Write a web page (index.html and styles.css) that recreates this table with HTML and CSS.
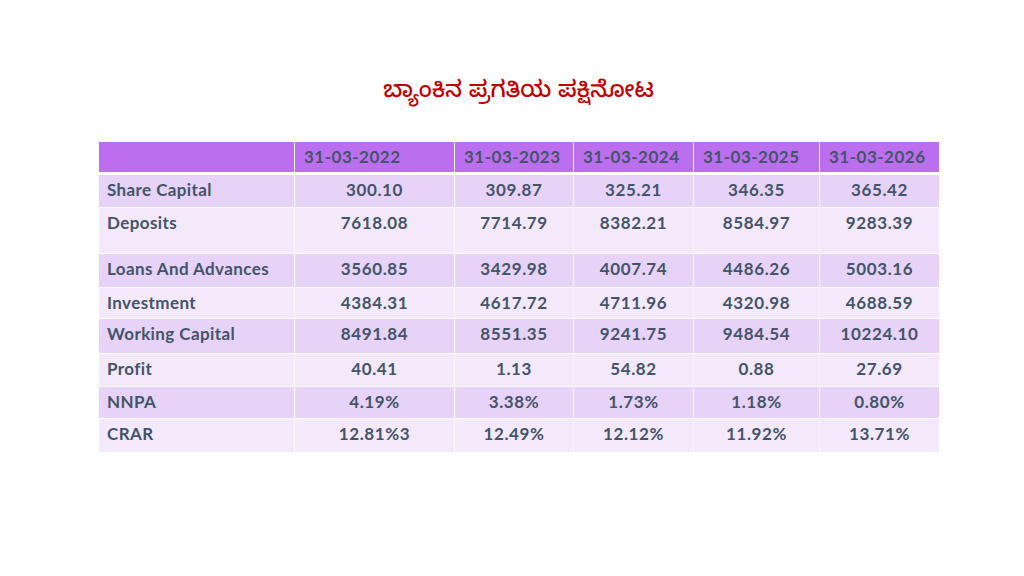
FILE: index.html
```html
<!DOCTYPE html>
<html lang="kn">
<head>
<meta charset="utf-8">
<title>ಬ್ಯಾಂಕಿನ ಪ್ರಗತಿಯ ಪಕ್ಷಿನೋಟ</title>
<link rel="stylesheet" href="styles.css">
</head>
<body>
<main class="slide">
  <h1 class="title">ಬ್ಯಾಂಕಿನ ಪ್ರಗತಿಯ ಪಕ್ಷಿನೋಟ</h1>
  <table class="grid">
    <colgroup>
      <col class="c1"><col class="c2"><col class="c3"><col class="c4"><col class="c5"><col class="c6">
    </colgroup>
    <thead>
      <tr class="h"><th></th><th>31-03-2022</th><th>31-03-2023</th><th>31-03-2024</th><th>31-03-2025</th><th>31-03-2026</th></tr>
    </thead>
    <tbody>
      <tr class="odd r1"><td>Share Capital</td><td>300.10</td><td>309.87</td><td>325.21</td><td>346.35</td><td>365.42</td></tr>
      <tr class="even r2"><td>Deposits</td><td>7618.08</td><td>7714.79</td><td>8382.21</td><td>8584.97</td><td>9283.39</td></tr>
      <tr class="odd r3"><td>Loans And Advances</td><td>3560.85</td><td>3429.98</td><td>4007.74</td><td>4486.26</td><td>5003.16</td></tr>
      <tr class="even r4"><td>Investment</td><td>4384.31</td><td>4617.72</td><td>4711.96</td><td>4320.98</td><td>4688.59</td></tr>
      <tr class="odd r5"><td>Working Capital</td><td>8491.84</td><td>8551.35</td><td>9241.75</td><td>9484.54</td><td>10224.10</td></tr>
      <tr class="even r6"><td>Profit</td><td>40.41</td><td>1.13</td><td>54.82</td><td>0.88</td><td>27.69</td></tr>
      <tr class="odd r7"><td>NNPA</td><td>4.19%</td><td>3.38%</td><td>1.73%</td><td>1.18%</td><td>0.80%</td></tr>
      <tr class="even r8"><td>CRAR</td><td>12.81%3</td><td>12.49%</td><td>12.12%</td><td>11.92%</td><td>13.71%</td></tr>
    </tbody>
  </table>
</main>
</body>
</html>
```
FILE: styles.css
```css
html, body {
  margin: 0;
  padding: 0;
  background: #ffffff;
}
.slide {
  width: 1024px;
  height: 576px;
  display: flex;
  flex-direction: column;
  align-items: flex-start;
  padding: 78px 0 0 98px;
  box-sizing: border-box;
  font-family: "Lato", "Open Sans", sans-serif;
}
.title {
  width: 841px;
  margin: 0 0 32px 0;
  text-align: center;
  color: #c00000;
  font-size: 23px;
  font-weight: 500;
  line-height: 32px;
  font-family: "Noto Sans Kannada", "Noto Sans", "DejaVu Sans", sans-serif;
}
.grid {
  border-collapse: collapse;
  table-layout: fixed;
  width: 841px;
  color: #44546a;
  font-size: 17px;
  font-weight: 700;
  letter-spacing: 0.6px;
}
.c1 { width: 196px; }
.c2 { width: 160px; }
.c3 { width: 119px; }
.c4 { width: 120px; }
.c5 { width: 126px; }
.c6 { width: 120px; }
.grid th, .grid td {
  border: 1px solid #ffffff;
  padding: 5px 8px 0 8px;
  vertical-align: top;
  text-align: center;
  line-height: 20px;
  box-sizing: border-box;
}
.grid td:first-child {
  text-align: left;
  letter-spacing: 0.4px;
}
.h th {
  background: #bb6fef;
  height: 31px;
  text-align: left;
  padding: 0 4px 0 9px;
  vertical-align: middle;
  letter-spacing: 0.5px;
  border-top: 0;
  border-bottom: 3px solid #ffffff;
}
.odd td { background: #e6d3f7; }
.even td { background: #f3e9fb; }
.r1 td { height: 34px; }
.r2 td { height: 46px; }
.r3 td { height: 34px; }
.r4 td { height: 31px; }
.r5 td { height: 35px; }
.r6 td { height: 33px; }
.r7 td { height: 32px; }
.r8 td { height: 34px; }
```
